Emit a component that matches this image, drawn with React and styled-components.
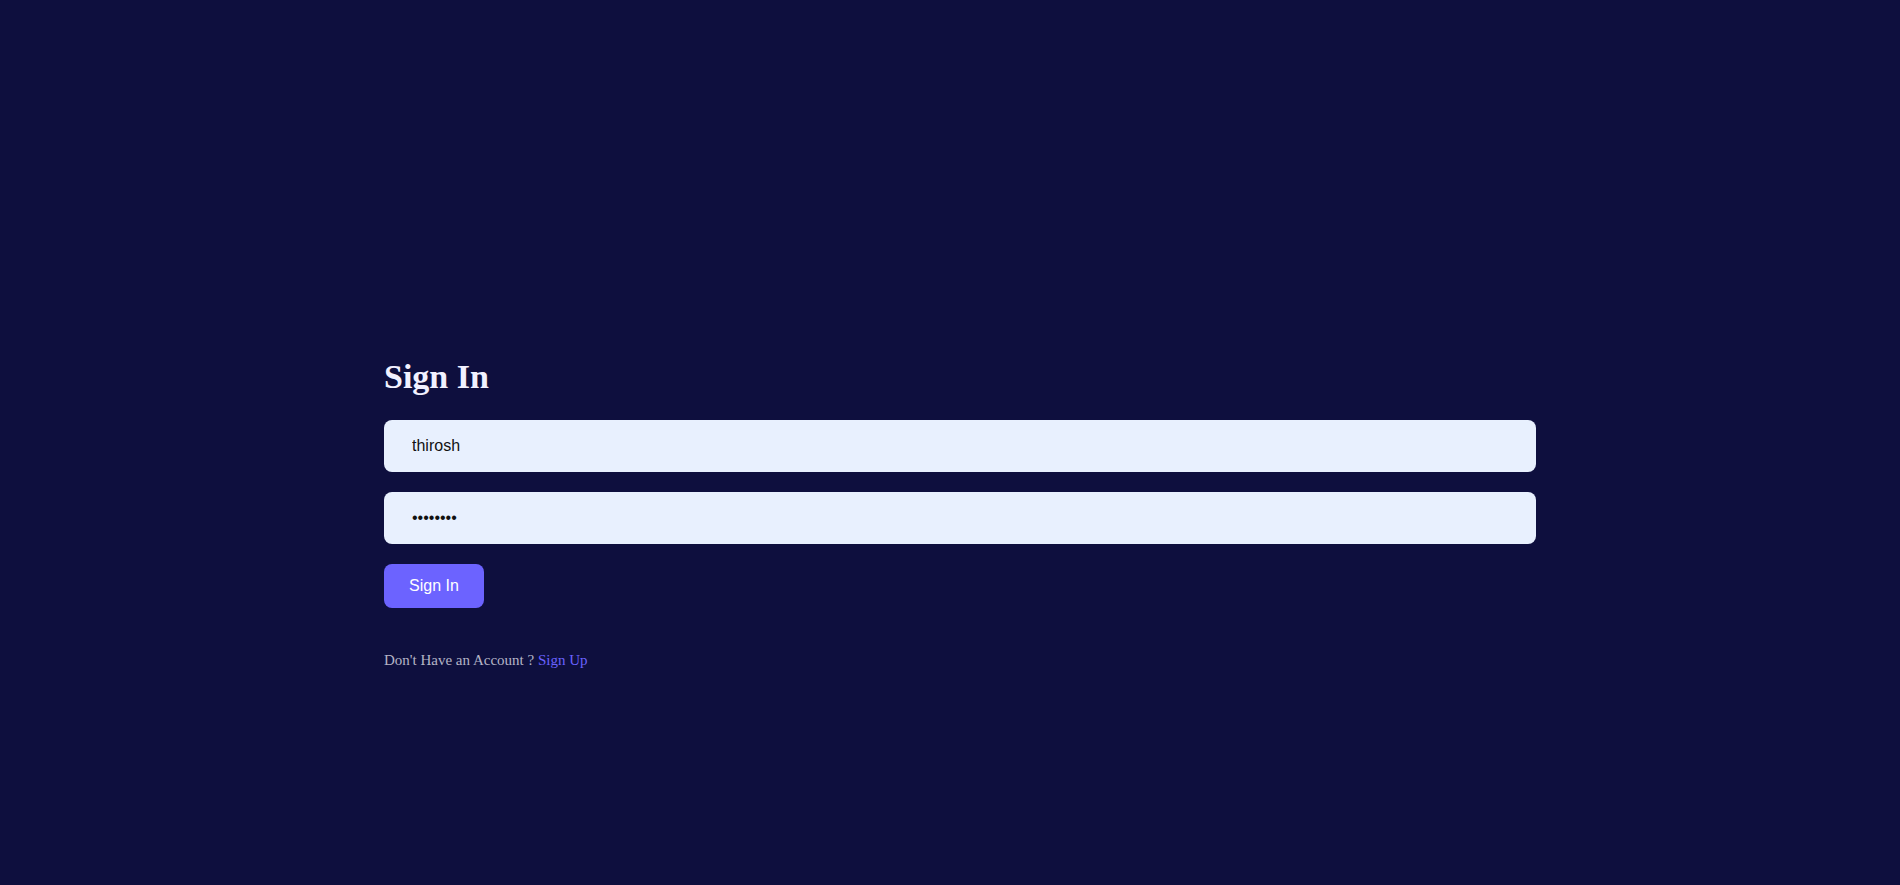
import React from 'react';
import styled, { createGlobalStyle } from 'styled-components';

const GlobalStyle = createGlobalStyle`
  html, body {
    margin: 0;
    padding: 0;
    background: #0e0f3e;
  }
  body {
    font-family: "Liberation Serif", "Times New Roman", serif;
  }
`;

const Page = styled.main`
  min-height: 885px;
  box-sizing: border-box;
  padding: 358px 0 0 384px;
`;

const Form = styled.form`
  width: 1152px;
  display: flex;
  flex-direction: column;
`;

const Title = styled.h2`
  margin: 0 0 24px;
  font-family: "Liberation Serif", "Times New Roman", serif;
  font-size: 34px;
  line-height: 38px;
  font-weight: 700;
  color: #f1f1ff;
`;

const Field = styled.input`
  height: 52px;
  box-sizing: border-box;
  margin: 0 0 20px;
  padding: 0 28px;
  border: none;
  border-radius: 8px;
  background: #e8f0fe;
  color: #111;
  font-family: "Liberation Sans", Arial, sans-serif;
  font-size: 16px;
  outline: none;
`;

const SubmitButton = styled.button`
  align-self: flex-start;
  width: 100px;
  height: 44px;
  padding: 0;
  border: none;
  border-radius: 8px;
  background: #6c63ff;
  color: #fff;
  font-family: "Liberation Sans", Arial, sans-serif;
  font-size: 16px;
  cursor: pointer;
`;

const Footer = styled.p`
  margin: 44px 0 0;
  font-size: 15px;
  line-height: 17px;
  color: #b4b4c6;
`;

const FooterLink = styled.a`
  color: #6a62ff;
  text-decoration: none;
`;

export default function App() {
  return (
    <>
      <GlobalStyle />
      <Page>
        <Form onSubmit={(e) => e.preventDefault()}>
          <Title>Sign In</Title>
          <Field type="text" defaultValue="thirosh" />
          <Field type="password" defaultValue="password" />
          <SubmitButton type="submit">Sign In</SubmitButton>
          <Footer>
            Don't Have an Account ? <FooterLink href="#">Sign Up</FooterLink>
          </Footer>
        </Form>
      </Page>
    </>
  );
}
